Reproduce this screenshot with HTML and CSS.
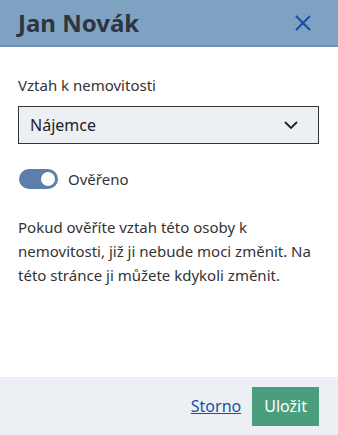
FILE: index.html
```html
<!DOCTYPE html>
<html lang="cs">
  <head>
    <meta charset="UTF-8" />
    <meta name="viewport" content="width=device-width, initial-scale=1.0" />
    <title>Jan Novák</title>
    <link rel="stylesheet" href="styles.css">
  </head>
  <body>
    <div class="dialog">
      <div class="dialog-header">
        <h1 class="dialog-title">Jan Novák</h1>
        <button class="close-btn" aria-label="Zavřít">
          <svg width="18" height="18" viewBox="0 0 18 18">
            <path d="M2 2 L16 16 M16 2 L2 16" stroke="#1a4fa8" stroke-width="2.2" fill="none" />
          </svg>
        </button>
      </div>

      <div class="dialog-body">
        <label class="field-label" for="relation">Vztah k nemovitosti</label>
        <div class="select">
          <span class="select-value">Nájemce</span>
          <svg width="14" height="8" viewBox="0 0 14 8">
            <path d="M1 1 L7 7 L13 1" stroke="#222" stroke-width="1.8" fill="none" />
          </svg>
        </div>

        <div class="toggle-row">
          <span class="toggle"><span class="knob"></span></span>
          <span class="toggle-label">Ověřeno</span>
        </div>

        <p class="note">
          Pokud ověříte vztah této osoby k nemovitosti, již ji nebude moci
          změnit. Na této stránce ji můžete kdykoli změnit.
        </p>
      </div>

      <div class="dialog-footer">
        <a href="#" class="link">Storno</a>
        <button class="save-btn">Uložit</button>
      </div>
    </div>
  </body>
</html>
```

FILE: styles.css
```css
body {
  margin: 0;
  font-family: "Noto Sans", "Open Sans", sans-serif;
  color: #333;
  background-color: #fff;
}

.dialog {
  height: 100vh;
  display: flex;
  flex-direction: column;
}

.dialog-header {
  height: 45px;
  flex-shrink: 0;
  background-color: #7fa2c3;
  border-bottom: 2px solid #6e93b6;
  display: flex;
  align-items: center;
  justify-content: space-between;
  padding: 0 26px 0 18px;
}

.dialog-title {
  margin: 0;
  font-size: 24px;
  font-weight: bold;
  color: #2e3440;
}

.close-btn {
  background: none;
  border: 0;
  padding: 0;
  display: flex;
}

.dialog-body {
  flex: 1;
  padding: 28px 19px 0 18px;
}

.field-label {
  display: block;
  font-size: 15px;
  line-height: 20px;
  color: #333;
  margin-bottom: 11px;
}

.select {
  height: 36px;
  border: 1px solid #333;
  background-color: #eceff4;
  display: flex;
  align-items: center;
  justify-content: space-between;
  padding: 0 20px 0 11px;
}

.select-value {
  font-size: 16px;
  color: #222;
}

.toggle-row {
  display: flex;
  align-items: center;
  height: 20px;
  margin-top: 25px;
}

.toggle {
  width: 39px;
  height: 20px;
  border-radius: 10px;
  background-color: #5a7fab;
  position: relative;
  margin-left: 1px;
}

.knob {
  position: absolute;
  right: 3px;
  top: 3px;
  width: 14px;
  height: 14px;
  border-radius: 50%;
  background-color: #fff;
}

.toggle-label {
  margin-left: 10px;
  font-size: 15px;
  color: #333;
}

.note {
  margin: 26px 0 0;
  font-size: 15px;
  line-height: 24px;
  color: #333;
}

.dialog-footer {
  height: 58px;
  flex-shrink: 0;
  background-color: #eceff4;
  display: flex;
  align-items: center;
  justify-content: flex-end;
  padding: 0 19px;
  gap: 11px;
}

.link {
  font-size: 16px;
  color: #1a4fa8;
}

.save-btn {
  height: 39px;
  padding: 0 12px;
  border: 0;
  background-color: #4a9e7e;
  color: #fff;
  font-family: inherit;
  font-size: 16px;
}
```
